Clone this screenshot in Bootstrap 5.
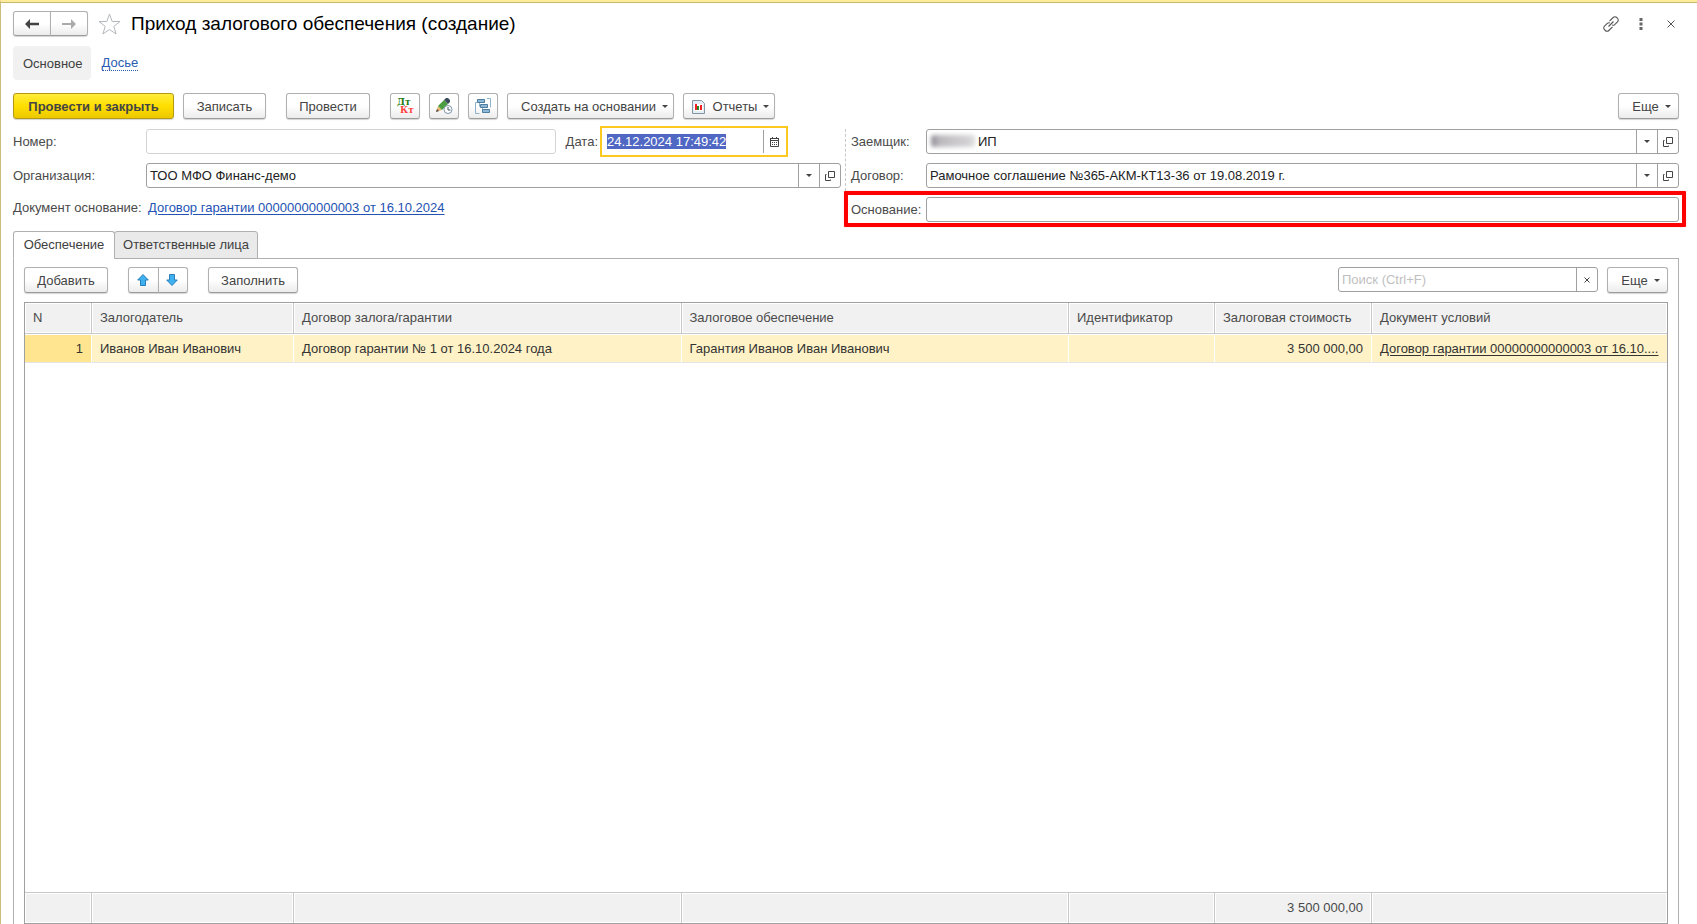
<!DOCTYPE html>
<html lang="ru">
<head>
<meta charset="utf-8">
<meta name="viewport" content="width=device-width, initial-scale=1">
<title>Приход залогового обеспечения (создание)</title>
<link href="https://cdn.jsdelivr.net/npm/bootstrap@5.3.0/dist/css/bootstrap.min.css" rel="stylesheet">
<style>
body{font-family:"Liberation Sans",Arial,sans-serif;font-size:13px;line-height:16px;color:#4a4a4a;background:#fff}
.app{min-height:100vh;border-top:2px solid #ffeb9c;border-left:1px solid #cdbd7d}
.app-in{border-top:1px solid #c8b968;padding:8px 18px 0 12px}
.doc-title{font-size:19px;line-height:24px;color:#000;margin:0 0 0 10px;font-weight:400}
.head-tools{gap:20px;padding-right:4px}
.head-dots{margin-right:4px}
.star{margin-left:10px}
.btn-f{--bs-btn-padding-x:13px;--bs-btn-padding-y:0;--bs-btn-font-size:13px;--bs-btn-line-height:16px;--bs-btn-color:#444;--bs-btn-border-color:#b0b0b0;--bs-btn-border-radius:3px;--bs-btn-hover-color:#444;--bs-btn-hover-border-color:#999;
 height:26px;background:linear-gradient(#fff 50%,#ececec);border-bottom-color:#9c9c9c;box-shadow:0 1px 1px #d4d4d4;display:inline-flex;align-items:center;justify-content:center;white-space:nowrap;padding-top:1px}
.btn-main{background:linear-gradient(#ffec3c,#ffdf00 50%,#ecc800);border-color:#b49a10;font-weight:700}
.btn-ic{width:30px;padding:0}
.nav-pair{width:38px;height:25px}
.caret::after{content:"";border:3px solid transparent;border-top-color:#444;border-bottom:0;margin-left:6px}
.w-close{width:161px}.w-write{width:83px}.w-post{width:84px}
.w-base{width:167px;padding:1px 0 0 8px}.w-rep{width:92px;padding:1px 0 0 3px}.w-more{width:61px;padding:1px 0 0 6px}
.w-add{width:84px}.w-fill{width:90px}
.btn-far{margin-left:11px}
.sections{margin-top:10px;gap:11px}
.sec-tab{background:#f1f1f1;border-radius:4px;padding:10px 8px 8px 10px;color:#404040}
.sec-link{color:#2a5db0;border-bottom:1px dotted #2a5db0;line-height:14px;text-decoration:none}
.commands{margin-top:13px;gap:9px}
.plain{border:0;background:none;padding:0;display:flex;color:#444}
.fields{margin-top:10px}
.form-row{height:25px}
.link-row{height:22px}
.lab{width:133px;flex:none}
.lab-doc{width:135px}
.lab-date{margin:0 2px 0 10px}
.lab-r{width:75px;flex:none}
.date-gap{width:53px}
.fld{border:1px solid #a0a0a0;border-radius:3px;height:25px;display:flex;background:#fff;min-width:0;overflow:hidden;flex:1 1 0}
.fld.mute{border-color:#d4d4d4}
.fld input{border:0;outline:0;padding:0 3px;flex:1 1 0;min-width:0;color:#222;background:none;font-size:13px;height:23px}
.fld input::placeholder{color:#bfbfbf}
.fld button{border:0;border-left:1px solid #a0a0a0;background:none;width:21px;padding:0;display:flex;align-items:center;justify-content:center;color:#444}
.date{border:2px solid #fbc91f;border-radius:0;height:31px;flex:none;width:188px;padding:2px}
.date input::selection{background:#5068c4;color:#fff}
.smudge{width:44px;height:12px;margin:5px 0 0 4px;border-radius:3px;background:linear-gradient(90deg,#8d8791,#b9b7bb 18%,#c8c6c9 50%,#cfcdd0 75%,#dddcde);filter:blur(2px)}
.col-left{width:828px;flex:none;display:grid;row-gap:9px;align-content:start}
.col-right{flex:1 1 0;min-width:0;margin-left:4px;padding-left:6px;position:relative;display:grid;row-gap:9px;align-content:start}
.col-right::before{content:"";position:absolute;left:0;top:0;height:62px;border-left:1px dashed #c8c8c8}
.marked{position:relative}
.marked::after{content:"";position:absolute;inset:-6px -7px -5px -7px;border:4px solid #f00;border-radius:1px;box-shadow:0 0 1px #f88;pointer-events:none}
.lnk{color:#2453b3;text-decoration:underline;text-underline-offset:2px}
.tabs{margin-top:9px;height:28px;z-index:1;position:relative;margin-bottom:-1px}
.tabs button{border:1px solid #b0b0b0;background:#eaeaea;height:28px;padding:0;border-radius:3px 3px 0 0;color:#404040;margin-right:-1px;white-space:nowrap}
.tabs button.on{background:#fff;border-bottom-color:#fff}
.tabs .t1{width:102px}.tabs .t2{width:144px}
.pane{border:1px solid #b0b0b0;border-bottom:0;padding:8px 10px 0 10px}
.arrows{margin:0 20px}
.arrows .btn{width:31px;padding:0 2px 0 0}
.arrows .btn + .btn{width:30px}
.search{width:260px;flex:none;margin-right:9px}
.tbl-wrap{display:grid;margin-top:9px;border:1px solid #a0a0a0}
.grid-t{table-layout:fixed;width:100%;height:100%;border-collapse:separate;border-spacing:0}
.grid-t th,.grid-t td{padding:0 8px;font-weight:400;overflow:hidden;white-space:nowrap;text-overflow:ellipsis;height:30px}
.grid-t thead th,.grid-t tfoot td{background:#f1f1f1;border-right:1px solid #c8c8c8;box-shadow:inset 0 0 0 1px #fff}
.grid-t thead th{border-bottom:1px solid #c8c8c8;height:31px}
.grid-t tfoot td{border-top:1px solid #c8c8c8;height:31px}
.grid-t th:last-child,.grid-t tfoot td:last-child{border-right:0}
.grid-t .rowsel td{background:#fff2c6;color:#333;height:29px;border-right:1px solid #fff;border-top:1px solid #fff;border-bottom:1px solid #e4e4e4}
.grid-t .rowsel td:first-child{background:#ffe58f}
.grid-t .rowsel td:last-child{padding-right:4px;border-right:0}
.grid-t .rowsel a{color:#333;text-underline-offset:2px}
.grid-t .void td{height:auto}
.c1{width:67px}.c2{width:202px}.c5{width:146px}.c6{width:157px}.c7{width:295px}
</style>
</head>
<body>
<svg class="d-none">
<symbol id="open" viewBox="0 0 10 10"><path d="M3.5.5h6v6h-6zM1.5 3.500h-1v6h5v-1" fill="none" stroke="currentColor"/></symbol>
<symbol id="down" viewBox="0 0 6 3"><path d="M0 0h6L3 3z" fill="currentColor"/></symbol>
</svg>
<div class="app d-flex flex-column">
<div class="app-in d-flex flex-column flex-grow-1">
 <header class="d-flex align-items-center">
  <div class="btn-group">
   <button class="btn btn-f btn-ic nav-pair" aria-label="Назад"><svg width="14" height="10" viewBox="0 0 14 10"><path d="M0 5l5-5v3.700h9v2.600H5V10z" fill="#444"/></svg></button>
   <button class="btn btn-f btn-ic nav-pair" aria-label="Вперед"><svg width="14" height="10" viewBox="0 0 14 10"><path d="M14 5L9 0v4H0v2h9v4z" fill="#aaa"/></svg></button>
  </div>
  <button class="plain star" aria-label="В избранное"><svg width="23" height="22" viewBox="0 0 23 22"><path d="M11.500 1l2.700 7.500H22l-6.200 4.900 2.300 7.600-6.600-4.500L4.900 21l2.300-7.600L1 8.500h7.800z" fill="#fff" stroke="#b3b8bd"/></svg></button>
  <h1 class="doc-title">Приход залогового обеспечения (создание)</h1>
  <div class="head-tools ms-auto d-flex align-items-center">
   <button class="plain" aria-label="Ссылка"><svg width="16" height="16" viewBox="0 0 16 16" fill="none" stroke="#555" stroke-width="1.100"><path d="M6.500 5.200l3.700-3.700a2.400 2.400 0 0 1 3.500 0l.8.8a2.400 2.400 0 0 1 0 3.500l-2.800 2.800a2.400 2.400 0 0 1-2.500.5M9.500 10.800l-3.700 3.700a2.400 2.400 0 0 1-3.500 0l-.8-.8a2.400 2.400 0 0 1 0-3.500l2.800-2.800a2.400 2.400 0 0 1 2.500-.5M5.500 10.500l5-5"/></svg></button>
   <button class="plain head-dots" aria-label="Меню"><svg width="4" height="12" viewBox="0 0 4 12" fill="#666"><path d="M.5 0h3v3h-3zM.5 4.500h3v3h-3zM.5 9h3v3h-3z"/></svg></button>
   <button class="plain" aria-label="Закрыть"><svg width="8" height="8" viewBox="0 0 8 8"><path d="M.5.5l7 7m0-7l-7 7" stroke="#555"/></svg></button>
  </div>
 </header>
 <nav class="sections d-flex align-items-center">
  <span class="sec-tab">Основное</span><a class="sec-link" href="#">Досье</a>
 </nav>
 <div class="commands d-flex">
  <button class="btn btn-f btn-main w-close">Провести и закрыть</button>
  <button class="btn btn-f w-write">Записать</button>
  <button class="btn btn-f w-post btn-far">Провести</button>
  <button class="btn btn-f btn-ic btn-far" aria-label="Дт Кт"><svg width="18" height="18" viewBox="0 0 18 18" font-family="DejaVu Serif,serif" font-weight="700" font-size="9"><text x="1" y="8" fill="#1e7a0c">Дт</text><text x="4" y="16" fill="#f44">Кт</text></svg></button>
  <button class="btn btn-f btn-ic" aria-label="Правка"><svg width="18" height="18" viewBox="0 0 18 18"><path d="M1 15L3 9l4 4z" fill="#e9b774"/><path d="M1 15l1-3 2 2z" fill="#444"/><path d="M3 9L9 3l4 4-6 6z" fill="#4a9e40"/><path d="M9 3l2-2h2l2 2v2l-2 2z" fill="#3b4d5c"/><circle cx="13" cy="12.500" r="4" fill="#fff" stroke="#7d97ab"/><path d="M13 10v3h2.500" fill="none" stroke="#456"/></svg></button>
  <button class="btn btn-f btn-ic" aria-label="Структура"><svg width="16" height="16" viewBox="0 0 16 16"><path d="M2.500 4.500h-2v11h4M12 .5h3.500v9M4.500 4.500v4h1M7.500 9.500V13h1" fill="none" stroke="#8fb2cb"/><path d="M2.500 1.500h7v3h-7zM5.500 6.500h7v3h-7zM7.500 11.500h7v3h-7z" fill="#8fb8d6" stroke="#4d7c9e"/></svg></button>
  <button class="btn btn-f w-base caret">Создать на основании</button>
  <button class="btn btn-f w-rep caret"><svg width="13" height="14" viewBox="0 0 13 14" class="me-2"><path d="M.5.5h9l3 3v10H.5z" fill="#e4edf3" stroke="#8295a3"/><path d="M2 4h9v7H2z" fill="#fff"/><path d="M3 4h2v6H3z" fill="#e22"/><path d="M5 6h2v4H5z" fill="#2a8a2a"/><path d="M8 5h2v5H8z" fill="#e22"/></svg>Отчеты</button>
  <button class="btn btn-f w-more caret ms-auto">Еще</button>
 </div>
 <div class="fields d-flex">
  <div class="col-left">
   <div class="form-row d-flex align-items-center">
    <label class="lab" for="num">Номер:</label><div class="fld mute"><input id="num"></div>
    <label class="lab-date" for="dt">Дата:</label>
    <div class="fld date"><input id="dt" value="24.12.2024 17:49:42"><button aria-label="Календарь"><svg width="9" height="10" viewBox="0 0 9 10"><path d="M.5 1.500h8v8h-8z" fill="#fff" stroke="#444"/><path d="M0 1h9v1H0zM1 3h7v1H1zM2 0h1v2H2zM6 0h1v2H6zM2 5h1v1H2zM4 5h1v1H4zM6 5h1v1H6zM2 7h1v1H2zM4 7h1v1H4zM6 7h1v1H6z" fill="#444"/></svg></button></div>
    <span class="date-gap"></span>
   </div>
   <div class="form-row d-flex align-items-center">
    <label class="lab" for="org">Организация:</label><div class="fld"><input id="org" value="ТОО МФО Финанс-демо"><button aria-label="Выбрать"><svg width="6" height="3"><use href="#down"/></svg></button><button aria-label="Открыть"><svg width="10" height="10"><use href="#open"/></svg></button></div>
   </div>
   <div class="link-row d-flex align-items-center"><span class="lab-doc">Документ основание:</span><a class="lnk" href="#">Договор гарантии 00000000000003 от 16.10.2024</a></div>
  </div>
  <div class="col-right">
   <div class="form-row d-flex align-items-center"><label class="lab-r" for="br">Заемщик:</label><div class="fld"><span class="smudge"></span><input id="br" value="ИП"><button aria-label="Выбрать"><svg width="6" height="3"><use href="#down"/></svg></button><button aria-label="Открыть"><svg width="10" height="10"><use href="#open"/></svg></button></div></div>
   <div class="form-row d-flex align-items-center"><label class="lab-r" for="ag">Договор:</label><div class="fld"><input id="ag" value="Рамочное соглашение №365-АКМ-КТ13-36 от 19.08.2019 г."><button aria-label="Выбрать"><svg width="6" height="3"><use href="#down"/></svg></button><button aria-label="Открыть"><svg width="10" height="10"><use href="#open"/></svg></button></div></div>
   <div class="form-row d-flex align-items-center marked"><label class="lab-r" for="bs">Основание:</label><div class="fld"><input id="bs"></div></div>
  </div>
 </div>
 <div class="tabs d-flex"><button class="on t1">Обеспечение</button><button class="t2">Ответственные лица</button></div>
 <section class="pane flex-grow-1 d-flex flex-column">
  <div class="d-flex">
   <button class="btn btn-f w-add">Добавить</button>
   <div class="btn-group arrows">
    <button class="btn btn-f" aria-label="Вверх"><svg width="12" height="12" viewBox="0 0 12 12"><path d="M6 .5l5.300 5.500H8.500v5.500h-5V6H.7z" fill="#3fb0f0" stroke="#2b7fb5"/></svg></button>
    <button class="btn btn-f" aria-label="Вниз"><svg width="12" height="12" viewBox="0 0 12 12"><path d="M6 11.500l5.300-5.500H8.500V.5h-5V6H.7z" fill="#3fb0f0" stroke="#2b7fb5"/></svg></button>
   </div>
   <button class="btn btn-f w-fill">Заполнить</button>
   <div class="fld search ms-auto"><input placeholder="Поиск (Ctrl+F)" aria-label="Поиск"><button aria-label="Очистить"><svg width="6" height="6" viewBox="0 0 6 6"><path d="M.5.5l5 5m0-5l-5 5" stroke="#444"/></svg></button></div>
   <button class="btn btn-f w-more caret">Еще</button>
  </div>
  <div class="tbl-wrap flex-grow-1">
   <table class="grid-t">
    <colgroup><col class="c1"><col class="c2"><col><col><col class="c5"><col class="c6"><col class="c7"></colgroup>
    <thead><tr><th>N</th><th>Залогодатель</th><th>Договор залога/гарантии</th><th>Залоговое обеспечение</th><th>Идентификатор</th><th>Залоговая стоимость</th><th>Документ условий</th></tr></thead>
    <tbody>
     <tr class="rowsel"><td class="text-end">1</td><td>Иванов Иван Иванович</td><td>Договор гарантии № 1 от 16.10.2024 года</td><td>Гарантия Иванов Иван Иванович</td><td></td><td class="text-end">3 500 000,00</td><td><a href="#">Договор гарантии 00000000000003 от 16.10....</a></td></tr>
     <tr class="void"><td colspan="7"></td></tr>
    </tbody>
    <tfoot><tr><td></td><td></td><td></td><td></td><td></td><td class="text-end">3 500 000,00</td><td></td></tr></tfoot>
   </table>
  </div>
 </section>
</div>
</div>
<script src="https://cdn.jsdelivr.net/npm/bootstrap@5.3.0/dist/js/bootstrap.bundle.min.js"></script>
<script>document.getElementById('dt').select();</script>
</body>
</html>
